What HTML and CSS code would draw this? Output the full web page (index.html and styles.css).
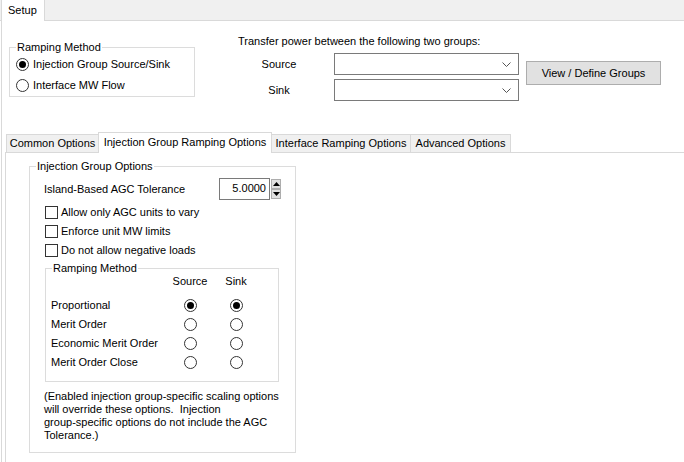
FILE: index.html
```html
<!DOCTYPE html>
<html>
<head>
<meta charset="utf-8">
<link rel="stylesheet" href="styles.css">
</head>
<body>
<div class="window">
  <div class="top-tabs">
    <div class="top-tab">Setup</div>
  </div>
  <div class="page">
    <div class="upper">
      <fieldset class="group ramp">
        <legend>Ramping Method</legend>
        <div class="opt"><span class="radio on"></span>Injection Group Source/Sink</div>
        <div class="opt"><span class="radio"></span>Interface MW Flow</div>
      </fieldset>
      <div class="transfer">
        <div class="transfer-title">Transfer power between the following two groups:</div>
        <div class="transfer-grid">
          <span class="lbl">Source</span>
          <div class="combo"><svg class="chev" width="9" height="5" viewBox="0 0 9 5"><polyline points="0.5,0.5 4.5,4.5 8.5,0.5" fill="none" stroke="#555" stroke-width="1"/></svg></div>
          <span class="lbl">Sink</span>
          <div class="combo"><svg class="chev" width="9" height="5" viewBox="0 0 9 5"><polyline points="0.5,0.5 4.5,4.5 8.5,0.5" fill="none" stroke="#555" stroke-width="1"/></svg></div>
        </div>
      </div>
      <div class="btn">View / Define Groups</div>
    </div>
    <div class="inner">
      <div class="tabs2">
        <div class="tab2 t-common">Common Options</div>
        <div class="tab2 sel">Injection Group Ramping Options</div>
        <div class="tab2 t-iface">Interface Ramping Options</div>
        <div class="tab2 t-adv">Advanced Options</div>
      </div>
      <div class="panel">
        <fieldset class="group igo">
          <legend>Injection Group Options</legend>
          <div class="igo-body">
            <div class="tol-row">
              <span class="tol-lbl">Island-Based AGC Tolerance</span>
              <div class="spin">
                <div class="spin-box">5.0000</div>
                <div class="spin-btns">
                  <div class="sbtn"><svg width="7" height="4" viewBox="0 0 7 4"><polygon points="0,4 3.5,0 7,4" fill="#000"/></svg></div>
                  <div class="sbtn"><svg width="7" height="4" viewBox="0 0 7 4"><polygon points="0,0 3.5,4 7,0" fill="#000"/></svg></div>
                </div>
              </div>
            </div>
            <div class="checks">
              <div class="chk-row"><span class="chk"></span>Allow only AGC units to vary</div>
              <div class="chk-row"><span class="chk"></span>Enforce unit MW limits</div>
              <div class="chk-row"><span class="chk"></span>Do not allow negative loads</div>
            </div>
            <fieldset class="group rm">
              <legend>Ramping Method</legend>
              <div class="rm-grid">
                <span></span><span class="hdr">Source</span><span class="hdr">Sink</span>
                <span class="rl">Proportional</span><span class="rc"><span class="radio on"></span></span><span class="rc"><span class="radio on"></span></span>
                <span class="rl">Merit Order</span><span class="rc"><span class="radio"></span></span><span class="rc"><span class="radio"></span></span>
                <span class="rl">Economic Merit Order</span><span class="rc"><span class="radio"></span></span><span class="rc"><span class="radio"></span></span>
                <span class="rl">Merit Order Close</span><span class="rc"><span class="radio"></span></span><span class="rc"><span class="radio"></span></span>
              </div>
            </fieldset>
            <p class="note">(Enabled injection group-specific scaling options<br>will override these options.&nbsp; Injection<br>group-specific options do not include the AGC<br>Tolerance.)</p>
          </div>
        </fieldset>
      </div>
    </div>
  </div>
</div>
</body>
</html>
```

FILE: styles.css
```css
* { box-sizing: border-box; }
html, body { margin: 0; padding: 0; }
body {
  width: 684px;
  height: 462px;
  overflow: hidden;
  background: #fff;
  color: #000;
  font: 11px/13px "Liberation Sans", Arial, sans-serif;
}
.window { display: flex; flex-direction: column; height: 462px; }

/* top tab strip */
.top-tabs {
  display: flex;
  align-items: flex-end;
  height: 21px;
  background: #f0f0f0;
  border-bottom: 1px solid #d9d9d9;
  padding-left: 1px;
}
.top-tab {
  height: 21px;
  margin-bottom: -1px;
  padding: 4px 7px 0 6px;
  background: #fff;
  border-left: 1px solid #d9d9d9;
  border-right: 1px solid #d9d9d9;
}

.page {
  flex: 1;
  display: flex;
  flex-direction: column;
  margin-left: 1px;
  border-left: 1px solid #d9d9d9;
}

/* upper area */
.upper {
  display: flex;
  align-items: flex-start;
  height: 111px;
  padding-left: 7px;
}
.group {
  margin: 0;
  border: 1px solid #dcdcdc;
  min-width: 0;
}
.group legend { padding: 0 1px; }
.ramp {
  width: 186px;
  margin-top: 20px;
  padding: 0 0 0 6px;
}
.opt {
  display: flex;
  align-items: center;
  height: 21px;
}
.opt .radio { margin-right: 4px; }

.radio {
  position: relative;
  display: inline-block;
  width: 13px;
  height: 13px;
  border: 1px solid #333;
  border-radius: 50%;
  background: #fff;
  flex: none;
}
.radio.on::after {
  content: "";
  position: absolute;
  left: 2px;
  top: 2px;
  width: 7px;
  height: 7px;
  border-radius: 50%;
  background: #000;
}

.transfer { margin-left: 43px; margin-top: 14px; }
.transfer-title { height: 13px; }
.transfer-grid {
  display: grid;
  grid-template-columns: 86px 185px;
  column-gap: 10px;
  row-gap: 4px;
  margin-top: 5px;
}
.lbl { display: flex; align-items: center; justify-content: center; padding-right: 4px; }
.combo {
  position: relative;
  height: 22px;
  border: 1px solid #7a7a7a;
  background: #fff;
}
.chev { position: absolute; right: 7px; top: 8px; }

.btn {
  margin-left: 7px;
  margin-top: 40px;
  width: 135px;
  height: 24px;
  border: 1px solid #adadad;
  background: #e1e1e1;
  display: flex;
  align-items: center;
  justify-content: center;
}

/* inner tab control */
.inner {
  flex: 1;
  display: flex;
  flex-direction: column;
  margin-left: 3px;
}
.tabs2 {
  display: flex;
  align-items: flex-end;
  height: 21px;
  border-bottom: 1px solid #d9d9d9;
  padding-left: 1px;
}
.tab2 {
  height: 18px;
  padding-top: 2px;
  text-align: center;
  white-space: nowrap;
  background: #f0f0f0;
  border: 1px solid #d9d9d9;
  border-bottom: none;
  margin-left: -1px;
}
.t-common { width: 93px; margin-left: 0; }
.t-iface { width: 140px; }
.t-adv { width: 101px; }
.tab2.sel {
  position: relative;
  z-index: 1;
  width: 174px;
  height: 21px;
  margin-bottom: -1px;
  padding-top: 3px;
  background: #fff;
}
.panel {
  flex: 1;
  border-left: 1px solid #d9d9d9;
  padding: 7px 0 0 23px;
}

.igo {
  width: 267px;
  padding: 0 0 0 6px;
  height: 293px;
}
.igo-body { padding-left: 8px; }
.tol-row {
  display: flex;
  align-items: center;
  height: 22px;
  margin-top: 5px;
}
.tol-lbl { width: 175px; }
.spin { display: flex; align-items: center; }
.spin-box {
  width: 51px;
  height: 22px;
  border: 1px solid #7a7a7a;
  background: #fff;
  text-align: right;
  padding: 3px 3px 0 0;
}
.spin-btns {
  display: flex;
  flex-direction: column;
  margin-left: 1px;
}
.sbtn {
  width: 10px;
  height: 10px;
  border: 1px solid #adadad;
  background: #e1e1e1;
  display: flex;
  align-items: center;
  justify-content: center;
}

.checks {
  display: flex;
  flex-direction: column;
  gap: 1px;
  margin-top: 3px;
}
.chk-row {
  display: flex;
  align-items: center;
  height: 18px;
  padding-left: 1px;
}
.chk {
  width: 13px;
  height: 13px;
  border: 1px solid #333;
  background: #fff;
  margin-right: 3px;
  flex: none;
}

.rm {
  width: 234px;
  margin: 3px 0 0 1px;
  padding: 0 0 9px 6px;
}
.rm-grid {
  display: grid;
  grid-template-columns: 112px 40px 40px;
  grid-template-rows: 21px repeat(4, 19px);
  column-gap: 6px;
}
.rm-grid > .rl { margin-left: -1px; }
.hdr { text-align: center; line-height: 12px; align-self: start; }
.rl { display: flex; align-items: center; white-space: nowrap; }
.rc { display: flex; align-items: center; justify-content: center; }

.note {
  margin: 8px 0 0 0;
  line-height: 13px;
}
```
